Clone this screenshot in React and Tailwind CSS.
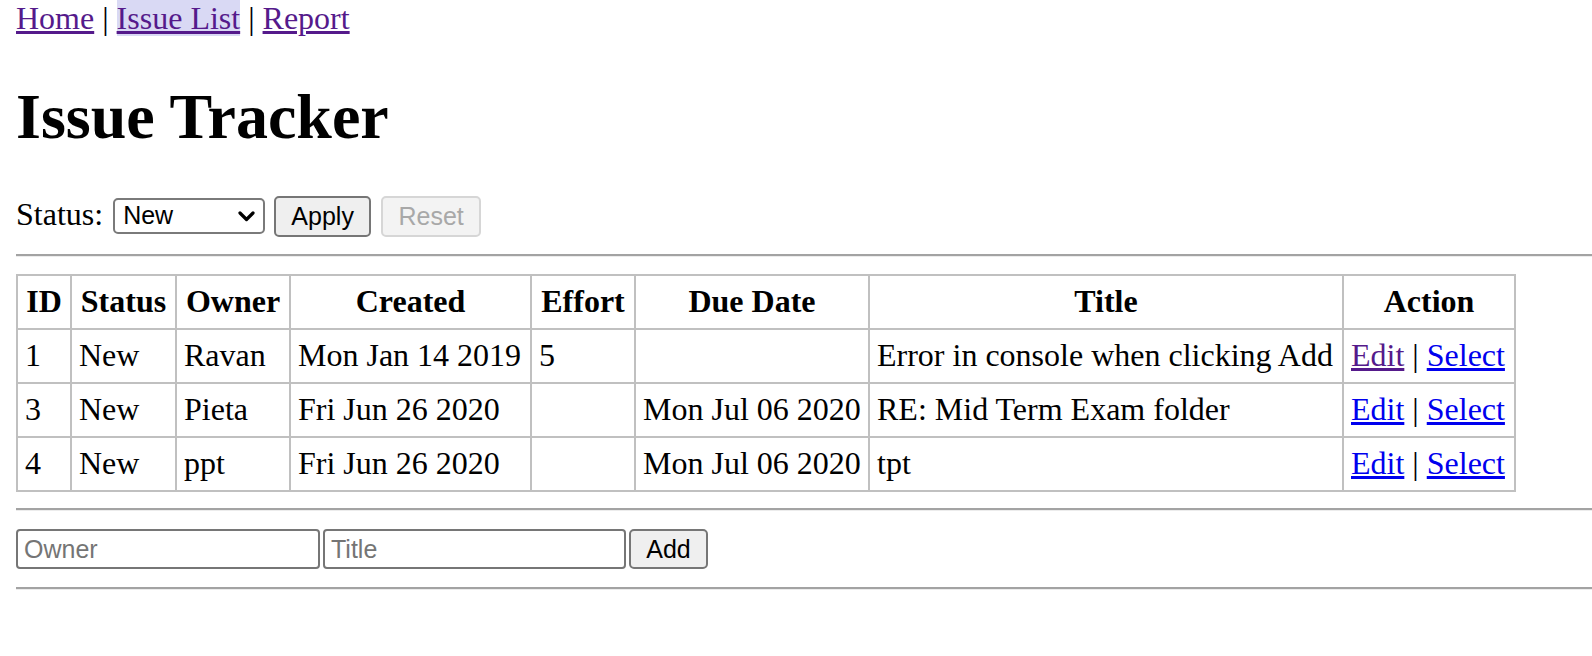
import React from "react";

const serif = { fontFamily: '"Liberation Serif", "Times New Roman", serif' };
const sans = { fontFamily: '"Liberation Sans", Arial, sans-serif' };

function Hr({ className = "" }) {
  return (
    <div
      className={
        "h-[3px] border-t-2 border-b border-t-[#a3a3a3] border-b-[#ececec] " +
        className
      }
    />
  );
}

const rows = [
  {
    id: "1",
    status: "New",
    owner: "Ravan",
    created: "Mon Jan 14 2019",
    effort: "5",
    due: "",
    title: "Error in console when clicking Add",
    visited: true,
  },
  {
    id: "3",
    status: "New",
    owner: "Pieta",
    created: "Fri Jun 26 2020",
    effort: "",
    due: "Mon Jul 06 2020",
    title: "RE: Mid Term Exam folder",
    visited: false,
  },
  {
    id: "4",
    status: "New",
    owner: "ppt",
    created: "Fri Jun 26 2020",
    effort: "",
    due: "Mon Jul 06 2020",
    title: "tpt",
    visited: false,
  },
];

const th =
  "border-2 border-[#c0c0c0] px-2 pt-[7px] pb-[9px] font-bold text-center whitespace-nowrap overflow-visible";
const td =
  "border-2 border-[#c0c0c0] pl-[7px] pr-2 pt-[7px] pb-[9px] text-left whitespace-nowrap overflow-visible";

export default function App() {
  return (
    <div
      className="bg-white text-black pl-4 min-h-[656px] text-[32px]"
      style={serif}
    >
      {/* Nav */}
      <div className="h-[35px] leading-[36px] whitespace-nowrap">
        <a href="#" className="text-[#551a8b] underline">
          Home
        </a>
        {" | "}
        <a href="#" className="text-[#551a8b] underline bg-[#d9d9f4]">
          Issue List
        </a>
        {" | "}
        <a href="#" className="text-[#551a8b] underline">
          Report
        </a>
      </div>

      {/* Heading */}
      <h1 className="mt-[50px] text-[64px] leading-[64px] font-bold">
        Issue Tracker
      </h1>

      {/* Filter */}
      <div className="mt-[47px] flex items-start h-[41px]">
        <span className="leading-[37px] mr-[10px]">Status:</span>
        <div
          className="mt-[2px] w-[152px] h-[36px] border-2 border-[#7a7a7a] rounded-[5px] flex items-center justify-between pl-[8px] pr-[8px] bg-white text-[25px]"
          style={sans}
        >
          <span>New</span>
          <svg width="17" height="11" viewBox="0 0 17 11">
            <path
              d="M2 2 L8.5 8.5 L15 2"
              fill="none"
              stroke="#000"
              strokeWidth="3.2"
              strokeLinecap="round"
              strokeLinejoin="round"
            />
          </svg>
        </div>
        <button
          className="ml-[9px] w-[97px] h-[41px] border-2 border-[#767676] rounded-[5px] bg-[#efefef] text-black text-[25px] leading-none"
          style={sans}
        >
          Apply
        </button>
        <button
          disabled
          className="ml-[10px] w-[100px] h-[41px] border-2 border-[#d6d6d6] rounded-[5px] bg-[#f3f3f3] text-[#a8a8a8] text-[25px] leading-none"
          style={sans}
        >
          Reset
        </button>
      </div>

      <Hr className="mt-[17px]" />

      {/* Table */}
      <table className="mt-[17px] w-[1498px] table-fixed border-collapse border-2 border-[#c0c0c0] leading-[36px]">
        <colgroup>
          <col className="w-[54px]" />
          <col className="w-[105px]" />
          <col className="w-[114px]" />
          <col className="w-[241px]" />
          <col className="w-[104px]" />
          <col className="w-[234px]" />
          <col className="w-[474px]" />
          <col className="w-[172px]" />
        </colgroup>
        <thead>
          <tr>
            <th className={th}>ID</th>
            <th className={th}>Status</th>
            <th className={th}>Owner</th>
            <th className={th}>Created</th>
            <th className={th}>Effort</th>
            <th className={th}>Due Date</th>
            <th className={th}>Title</th>
            <th className={th}>Action</th>
          </tr>
        </thead>
        <tbody>
          {rows.map((r) => (
            <tr key={r.id}>
              <td className={td}>{r.id}</td>
              <td className={td}>{r.status}</td>
              <td className={td}>{r.owner}</td>
              <td className={td}>{r.created}</td>
              <td className={td}>{r.effort}</td>
              <td className={td}>{r.due}</td>
              <td className={td}>{r.title}</td>
              <td className={td}>
                <a
                  href="#"
                  className={
                    r.visited
                      ? "text-[#551a8b] underline"
                      : "text-[#0000ee] underline"
                  }
                >
                  Edit
                </a>
                {" | "}
                <a href="#" className="text-[#0000ee] underline">
                  Select
                </a>
              </td>
            </tr>
          ))}
        </tbody>
      </table>

      <Hr className="mt-[16px]" />

      {/* Add form */}
      <div
        className="mt-[18px] flex items-center gap-[3px] text-[25px]"
        style={sans}
      >
        <input
          placeholder="Owner"
          className="w-[304px] h-[40px] border-2 border-[#767676] rounded-[4px] px-[6px] placeholder:text-[#757575] bg-white outline-none"
        />
        <input
          placeholder="Title"
          className="w-[303px] h-[40px] border-2 border-[#767676] rounded-[4px] px-[6px] placeholder:text-[#757575] bg-white outline-none"
        />
        <button className="w-[79px] h-[40px] border-2 border-[#767676] rounded-[5px] bg-[#efefef] text-black leading-none">
          Add
        </button>
      </div>

      <Hr className="mt-[18px]" />
    </div>
  );
}
